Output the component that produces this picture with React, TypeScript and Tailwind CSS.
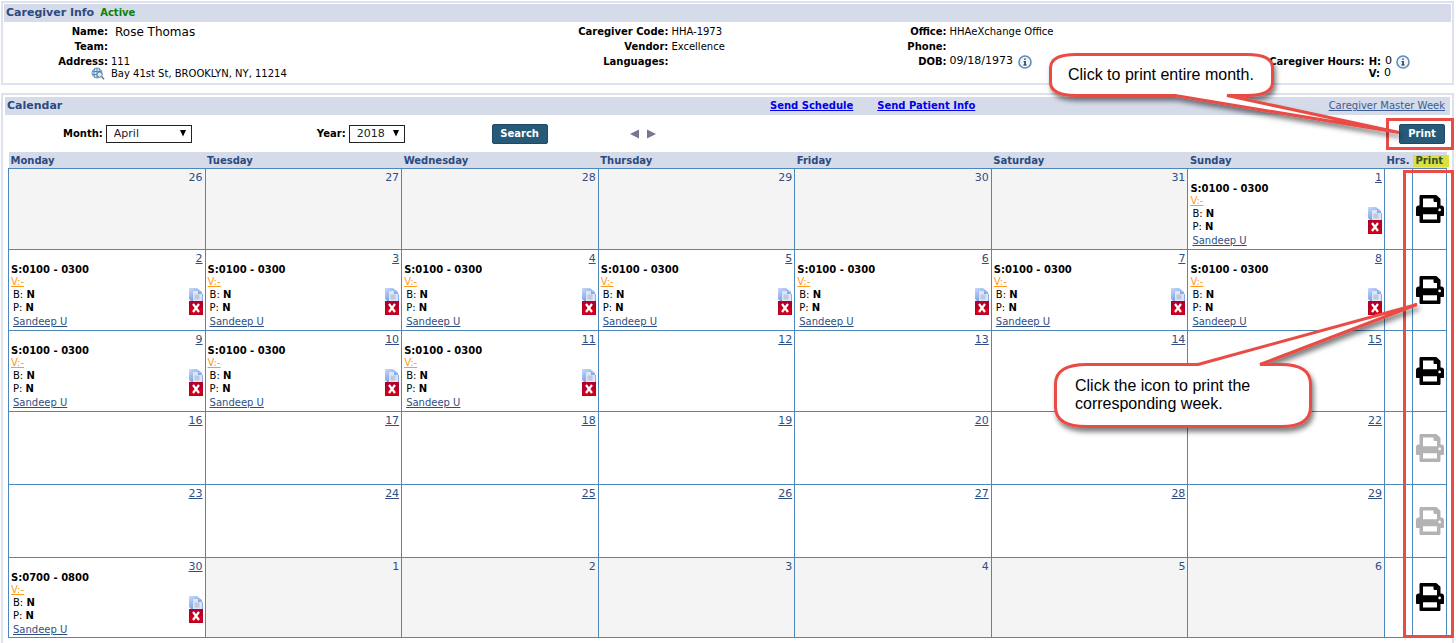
import type { ReactNode } from "react";

type Visit = { time: string };
type Day = { date: number; outside?: boolean; visit?: Visit };
type Week = { days: Day[]; height: string; printable: boolean };

const dayNames = ["Monday", "Tuesday", "Wednesday", "Thursday", "Friday", "Saturday", "Sunday"];
const early: Visit = { time: "0100 - 0300" };

const weeks: Week[] = [
  {
    height: "h-[81px]",
    printable: true,
    days: [
      ...[26, 27, 28, 29, 30, 31].map((date) => ({ date, outside: true })),
      { date: 1, visit: early },
    ],
  },
  {
    height: "h-[81px]",
    printable: true,
    days: [2, 3, 4, 5, 6, 7, 8].map((date) => ({ date, visit: early })),
  },
  {
    height: "h-[81px]",
    printable: true,
    days: [9, 10, 11, 12, 13, 14, 15].map((date) => ({ date, visit: date < 12 ? early : undefined })),
  },
  { height: "h-[73px]", printable: false, days: [16, 17, 18, 19, 20, 21, 22].map((date) => ({ date })) },
  { height: "h-[73px]", printable: false, days: [23, 24, 25, 26, 27, 28, 29].map((date) => ({ date })) },
  {
    height: "h-[80px]",
    printable: true,
    days: [
      { date: 30, visit: { time: "0700 - 0800" } },
      ...[1, 2, 3, 4, 5, 6].map((date) => ({ date, outside: true })),
    ],
  },
];

function PrinterIcon() {
  return (
    <svg viewBox="0 0 512 512" className="size-7" fill="currentColor" aria-hidden="true">
      <path d="M464 192h-16V81.941a24 24 0 0 0-7.029-16.97L383.029 7.029A24 24 0 0 0 366.059 0H88C74.745 0 64 10.745 64 24v168H48c-26.51 0-48 21.49-48 48v132c0 6.627 5.373 12 12 12h52v104c0 13.255 10.745 24 24 24h336c13.255 0 24-10.745 24-24V384h52c6.627 0 12-5.373 12-12V240c0-26.51-21.49-48-48-48zm-80 256H128v-96h256v96zM128 224V64h192v40c0 13.2 10.8 24 24 24h40v96H128zm304 72c-13.254 0-24-10.746-24-24s10.746-24 24-24 24 10.746 24 24-10.746 24-24 24z" />
    </svg>
  );
}

function InfoIcon() {
  return (
    <svg viewBox="0 0 14 14" className="size-[14px]" aria-hidden="true">
      <circle cx="7" cy="7" r="6" fill="#eef4fb" stroke="#5f8cb8" strokeWidth="1.6" />
      <path d="M6.200 3.400h1.600v1.400H6.200zM5.500 5.900h2.300v3.700h.8v.9H5.400v-.9h.9V6.800h-.8z" fill="#1c2f4a" />
    </svg>
  );
}

function GlobeIcon() {
  return (
    <svg viewBox="0 0 14 13" className="h-[13px] w-[14px]" aria-hidden="true">
      <circle cx="6" cy="6" r="5" fill="#cfe3f0" stroke="#6d9dbd" />
      <path d="M1.5 4.5h9M1.5 7.5h7M6 1v10M4 1.5c-1.5 3-1.5 6 0 9M8 1.5c1.2 2 1.3 4 1 6" stroke="#4f84aa" strokeWidth=".9" fill="none" />
      <circle cx="8.6" cy="7.6" r="2.6" fill="#dcebf5" stroke="#607f96" />
      <path d="m10.6 9.6 2.4 2.6" stroke="#777" strokeWidth="1.5" />
    </svg>
  );
}

function CopyIcon() {
  return (
    <svg viewBox="0 0 14 13" className="h-[13px] w-[14px]" aria-hidden="true">
      <defs>
        <linearGradient id="sheet" x1="0" y1="0" x2="0.6" y2="1">
          <stop offset="0" stopColor="#c9dafa" />
          <stop offset="1" stopColor="#6f97e4" />
        </linearGradient>
      </defs>
      <path d="M0 0h8l5 4v9H2L0 11z" fill="url(#sheet)" />
      <path d="M4 3h6l3.500 3.500V13H4z" fill="#dbe6fb" />
      <path d="M9 2.500V6h4.500z" fill="#86a9ee" />
      <path d="M5.500 6.500h5v5h-5z" fill="#c0c9d9" />
      <path d="M13.500 6v7" stroke="#8fadea" />
    </svg>
  );
}

function DeleteIcon() {
  return (
    <svg viewBox="0 0 14 14" className="size-[14px]" aria-hidden="true">
      <path d="M0 0h14v14H0z" fill="#b3002a" />
      <path d="M1 7h12v6H1z" fill="#d60016" />
      <path d="M4 3 10 11M10 3 4 11" stroke="#fff" strokeWidth="2.200" />
    </svg>
  );
}

function Field({ label, children }: { label: string; children?: ReactNode }) {
  return (
    <div className="flex h-[15px] items-center gap-[3px]">
      <dt className="w-[104px] shrink-0 text-right font-bold">{label}</dt>
      <dd className="flex items-center gap-[5px] whitespace-nowrap">{children}</dd>
    </div>
  );
}

function PanelHeader({ children }: { children: ReactNode }) {
  return <header className="h-[18px] bg-[#d5dbe9] px-[2px] leading-[18px]">{children}</header>;
}

function Picker({ id, label, value, width }: { id: string; label: string; value: string; width: string }) {
  return (
    <div className="flex items-center gap-[3px]">
      <label htmlFor={id} className="font-bold">
        {label}
      </label>
      <div className="relative">
        <select
          id={id}
          defaultValue={value}
          className={`${width} block h-[18px] appearance-none border border-[#222] bg-white pl-[7px] text-[11px] leading-4 text-[#222]`}
        >
          <option>{value}</option>
        </select>
        <svg viewBox="0 0 8 7" className="pointer-events-none absolute top-[5px] right-[5px] h-[7px] w-2" aria-hidden="true">
          <path d="M1 0h6L4 6.500z" fill="#000" />
        </svg>
      </div>
    </div>
  );
}

function DayCell({ day }: { day: Day }) {
  return (
    <td className={`border border-[#4f87bb] px-[2px] pt-px align-top ${day.outside ? "bg-[#f4f4f4]" : ""}`}>
      <div className="h-[13px] text-right text-[11px] leading-[15px] text-[#2f4f85]">
        {day.outside ? day.date : <a href="#day" className="underline">{day.date}</a>}
      </div>
      {day.visit && (
        <div>
          <div className="leading-3 font-bold text-black">S:{day.visit.time}</div>
          <a href="#visit" className="block w-fit leading-3 text-[#ff9a1a] underline">V:-</a>
          <div className="flex h-[27px] items-start justify-between pl-[2px] text-black">
            <div className="leading-[13px]">
              <div>B: <b>N</b></div>
              <div>P: <b>N</b></div>
            </div>
            <div className="flex flex-col">
              <button type="button" aria-label="Copy visit"><CopyIcon /></button>
              <button type="button" aria-label="Delete visit"><DeleteIcon /></button>
            </div>
          </div>
          <a href="#patient" className="block w-fit pl-[2px] leading-[13px] text-[#2f4f85] underline">Sandeep U</a>
        </div>
      )}
    </td>
  );
}

function Annotations() {
  return (
    <div className="pointer-events-none absolute top-0 right-0 h-[643px] w-[416px] text-base leading-[18px] text-black">
      <svg viewBox="1040 0 416 643" className="absolute inset-0 h-full w-full" aria-hidden="true">
        <defs>
          <filter id="shade" x="-10%" y="-20%" width="125%" height="150%">
            <feDropShadow dx="2" dy="4" stdDeviation="2.5" floodColor="#000" floodOpacity=".5" />
          </filter>
        </defs>
        <g fill="none" stroke="#e94b45" strokeWidth="3">
          <path d="M1387.500 119.500h65v29h-65z" />
          <path d="M1404.500 171.500h48v465h-48z" />
        </g>
        <g fill="#fff" stroke="#e94b45" strokeWidth="3" strokeLinejoin="bevel" filter="url(#shade)">
          <path d="M1076 54.500H1247Q1272.500 54.500 1272.500 68V82Q1272.500 95.500 1247 95.500H1227L1399 132.500 1175 95.500H1076Q1050.500 95.500 1050.500 82V68Q1050.500 54.500 1076 54.500Z" />
          <path d="M1087 364.500H1198L1417 304.500 1260 364.500H1281Q1310.500 364.500 1310.500 384V407Q1310.500 426.500 1281 426.500H1087Q1055.500 426.500 1055.500 407V384Q1055.500 364.500 1087 364.500Z" />
        </g>
      </svg>
      <p className="absolute top-[66px] left-7 font-['Liberation_Sans',Arial,sans-serif] whitespace-nowrap">
        Click to print entire month.
      </p>
      <p className="absolute top-[377px] left-[35px] font-['Liberation_Sans',Arial,sans-serif] whitespace-nowrap">
        Click the icon to print the
        <br />
        corresponding week.
      </p>
    </div>
  );
}

const buttonClass = "h-5 rounded-[2px] border border-[#1d4a66] bg-[#265a77] text-[10px] leading-none font-bold text-white";

export default function App() {
  return (
    <main className="relative flex min-h-screen flex-col bg-white px-px pt-px font-['DejaVu_Sans',Verdana,sans-serif] text-[10px] text-black">
      <section className="mr-px border-2 border-[#dde2ef] p-px pb-[5px]">
        <PanelHeader>
          <div className="flex gap-[6px]">
            <h2 className="text-[11px] leading-[18px] font-bold text-[#2b4a80]">Caregiver Info</h2>
            <span className="font-bold text-[#0a820a]">Active</span>
          </div>
        </PanelHeader>
        <dl className="grid grid-cols-[560fr_278fr_278fr_330fr] pt-[2px]">
          <div>
            <Field label="Name:">
              <span className="pl-1 text-xs">Rose Thomas</span>
            </Field>
            <Field label="Team:" />
            <Field label="Address:">111</Field>
            <div className="flex h-[9px] items-center gap-[6px] pl-[87px] leading-[9px]">
              <GlobeIcon />
              <dd>Bay 41st St, BROOKLYN, NY, 11214</dd>
            </div>
          </div>
          <div>
            <Field label="Caregiver Code:">HHA-1973</Field>
            <Field label="Vendor:">Excellence</Field>
            <Field label="Languages:" />
          </div>
          <div>
            <Field label="Office:">HHAeXchange Office</Field>
            <Field label="Phone:" />
            <Field label="DOB:">
              <span className="text-[11px]">09/18/1973</span> <InfoIcon />
            </Field>
          </div>
          <div className="flex justify-end gap-1 pt-[30px] pr-[41px]">
            <dt className="leading-[15px] font-bold whitespace-nowrap">Caregiver Hours:</dt>
            <dd className="text-[11px]">
              <div className="flex h-[15px] items-center gap-1">
                <b className="text-[10px]">H:</b> 0 <InfoIcon />
              </div>
              <div className="flex h-[9px] items-center gap-1">
                <b className="text-[10px]">V:</b> 0
              </div>
            </dd>
          </div>
        </dl>
      </section>

      <section className="mt-2 mr-px flex-1 border-2 border-b-0 border-[#dde2ef] p-[2px]">
        <PanelHeader>
          <div className="grid grid-cols-[763fr_678fr]">
            <h2 className="text-[11px] leading-[18px] font-bold text-[#2b4a80]">Calendar</h2>
            <nav className="flex gap-6 pr-[3px] whitespace-nowrap">
              <a href="#schedule" className="font-bold text-[#0000ee] underline">Send Schedule</a>
              <a href="#patient-info" className="font-bold text-[#0000ee] underline">Send Patient Info</a>
              <a href="#master-week" className="ml-auto text-[#3c5a94] underline">Caregiver Master Week</a>
            </nav>
          </div>
        </PanelHeader>

        <form className="flex h-[37px] items-center pr-[5px] pl-[58px]" onSubmit={(e) => e.preventDefault()}>
          <Picker id="month" label="Month:" value="April" width="w-[86px]" />
          <div className="ml-[125px]">
            <Picker id="year" label="Year:" value="2018" width="w-[56px]" />
          </div>
          <button type="submit" className={`${buttonClass} ml-[87px] w-14`}>Search</button>
          <div className="ml-[82px] flex gap-[6px]">
            <button type="button" aria-label="Previous month">
              <svg viewBox="0 0 10 10" className="size-[10px]"><path d="M9 .5v9L0 5z" fill="#77778f" /></svg>
            </button>
            <button type="button" aria-label="Next month">
              <svg viewBox="0 0 10 10" className="size-[10px]"><path d="M1 .5v9L10 5z" fill="#77778f" /></svg>
            </button>
          </div>
          <button type="button" className={`${buttonClass} ml-auto w-[46px]`}>Print</button>
        </form>

        <div className="px-[3px]">
          <table className="w-full table-fixed border-collapse">
            <colgroup>
              {dayNames.map((name) => <col key={name} />)}
              <col className="w-7" />
              <col className="w-[34px]" />
            </colgroup>
            <thead>
              <tr className="h-4 bg-[#d5dbe9] text-left align-bottom leading-[14px] text-[#2b4a80]">
                {dayNames.map((name) => (
                  <th key={name} scope="col" className="px-[2px]">{name}</th>
                ))}
                <th scope="col" className="pl-[2px]">Hrs.</th>
                <th scope="col" className="pb-px">
                  <div className="h-3 w-9 bg-[#dbe03f] pl-[3px] leading-3 text-[#33512c]">Print</div>
                </th>
              </tr>
            </thead>
            <tbody>
              {weeks.map((week, index) => (
                <tr key={index} className={week.height}>
                  {week.days.map((day) => <DayCell key={day.date} day={day} />)}
                  <td className="border border-[#4f87bb]" />
                  <td className="border border-[#4f87bb] p-0">
                    <button
                      type="button"
                      aria-label="Print week"
                      disabled={!week.printable}
                      className={`mx-auto block ${week.printable ? "text-black" : "text-[#b3b3b3]"}`}
                    >
                      <PrinterIcon />
                    </button>
                  </td>
                </tr>
              ))}
            </tbody>
          </table>
        </div>
      </section>
      <Annotations />
    </main>
  );
}
